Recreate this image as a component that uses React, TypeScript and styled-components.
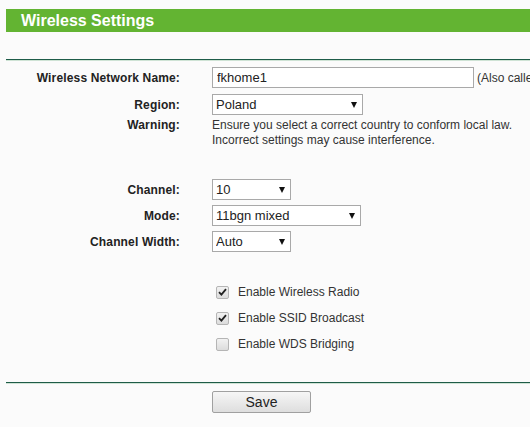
import React from "react";
import styled, { createGlobalStyle } from "styled-components";

const Global = createGlobalStyle`
  html, body { margin: 0; padding: 0; background: #fbfbfb; }
  body { font-family: "Liberation Sans", Arial, sans-serif; color: #222; overflow: hidden; }
`;

const Page = styled.div`
  width: 530px;
  height: 427px;
  padding-left: 6px;
  box-sizing: border-box;
  overflow: hidden;
`;

const Header = styled.div`
  margin-top: 9px;
  height: 23px;
  background: #63b432;
  display: flex;
  align-items: center;
  padding-left: 15px;
`;

const Title = styled.h1`
  margin: 0;
  font-size: 16px;
  font-weight: bold;
  color: #ffffff;
  line-height: 23px;
`;

const Rule = styled.div<{ $top: number }>`
  margin-top: ${(p) => p.$top}px;
  height: 1px;
  background: #1e5c48;
  border-bottom: 1px solid #cfe3d5;
`;

const Form = styled.div`
  display: flex;
  flex-direction: column;
  padding-top: 6px;
`;

const Row = styled.div<{ $mt?: number; $h?: number; $align?: string }>`
  display: grid;
  grid-template-columns: 174px 1fr;
  column-gap: 32px;
  align-items: ${(p) => p.$align || "center"};
  margin-top: ${(p) => p.$mt || 0}px;
  min-height: ${(p) => p.$h || 21}px;
`;

const Label = styled.div<{ $lh?: number }>`
  text-align: right;
  font-size: 12px;
  font-weight: bold;
  letter-spacing: 0.15px;
  color: #222;
  white-space: nowrap;
  line-height: ${(p) => (p.$lh ? `${p.$lh}px` : "normal")};
`;

const Control = styled.div`
  display: flex;
  align-items: center;
  white-space: nowrap;
`;

const TextInput = styled.input`
  width: 262px;
  height: 21px;
  box-sizing: border-box;
  border: 1px solid #a9a9a9;
  background: #fff;
  font-family: "Liberation Sans", Arial, sans-serif;
  font-size: 13px;
  color: #222;
  padding: 0 4px;
  margin: 0;
  outline: none;
`;

const Aside = styled.span`
  margin-left: 3px;
  font-size: 12px;
  color: #333;
`;

const SelectWrap = styled.div<{ $w: number }>`
  position: relative;
  width: ${(p) => p.$w}px;
  height: 21px;
  &::after {
    content: "";
    position: absolute;
    right: 6px;
    top: 8px;
    border-left: 3.5px solid transparent;
    border-right: 3.5px solid transparent;
    border-top: 6px solid #111;
    pointer-events: none;
  }
`;

const Select = styled.select`
  appearance: none;
  -webkit-appearance: none;
  width: 100%;
  height: 21px;
  box-sizing: border-box;
  border: 1px solid #a9a9a9;
  border-radius: 0;
  background: #fff;
  font-family: "Liberation Sans", Arial, sans-serif;
  font-size: 13px;
  color: #222;
  padding: 0 3px;
  margin: 0;
  outline: none;
`;

const Note = styled.div`
  font-size: 12px;
  line-height: 15px;
  color: #333;
`;

const CheckRow = styled.label<{ $mt?: number }>`
  display: flex;
  align-items: center;
  height: 26px;
  margin-top: ${(p) => p.$mt || 0}px;
  padding-left: 210px;
  font-size: 12px;
  color: #333;
`;

const Box = styled.span`
  width: 13px;
  height: 13px;
  box-sizing: border-box;
  border: 1px solid #b5b5b5;
  border-radius: 2px;
  background: linear-gradient(#f2f2f2, #dcdcdc);
  display: flex;
  align-items: center;
  justify-content: center;
  margin-right: 9px;
`;

const ButtonRow = styled.div`
  padding-left: 206px;
  margin-top: 7px;
`;

const SaveButton = styled.button`
  width: 99px;
  height: 22px;
  border: 1px solid #a0a0a0;
  border-radius: 2px;
  background: linear-gradient(#f6f6f6, #dedede);
  font-family: "Liberation Sans", Arial, sans-serif;
  font-size: 14px;
  color: #222;
  padding: 0;
`;

const Check = ({ on }: { on: boolean }) => (
  <Box>
    {on && (
      <svg width="9" height="8" viewBox="0 0 9 8">
        <path d="M1 4.2 L3.4 6.6 L8 1.2" fill="none" stroke="#222" strokeWidth="1.8" />
      </svg>
    )}
  </Box>
);

export default function App() {
  return (
    <>
      <Global />
      <Page>
        <Header>
          <Title>Wireless Settings</Title>
        </Header>
        <Rule $top={27} />
        <Form>
          <Row>
            <Label>Wireless Network Name:</Label>
            <Control>
              <TextInput defaultValue="fkhome1" />
              <Aside>(Also called the SSID)</Aside>
            </Control>
          </Row>
          <Row $mt={6}>
            <Label>Region:</Label>
            <Control>
              <SelectWrap $w={151}>
                <Select defaultValue="Poland">
                  <option>Poland</option>
                </Select>
              </SelectWrap>
            </Control>
          </Row>
          <Row $mt={3} $align="start" $h={30}>
            <Label $lh={15}>Warning:</Label>
            <Note>
              Ensure you select a correct country to conform local law.
              <br />
              Incorrect settings may cause interference.
            </Note>
          </Row>
          <Row $mt={31}>
            <Label>Channel:</Label>
            <Control>
              <SelectWrap $w={79}>
                <Select defaultValue="10">
                  <option>10</option>
                </Select>
              </SelectWrap>
            </Control>
          </Row>
          <Row $mt={5}>
            <Label>Mode:</Label>
            <Control>
              <SelectWrap $w={149}>
                <Select defaultValue="11bgn mixed">
                  <option>11bgn mixed</option>
                </Select>
              </SelectWrap>
            </Control>
          </Row>
          <Row $mt={5}>
            <Label>Channel Width:</Label>
            <Control>
              <SelectWrap $w={79}>
                <Select defaultValue="Auto">
                  <option>Auto</option>
                </Select>
              </SelectWrap>
            </Control>
          </Row>
          <CheckRow $mt={27}>
            <Check on={true} />
            Enable Wireless Radio
          </CheckRow>
          <CheckRow>
            <Check on={true} />
            Enable SSID Broadcast
          </CheckRow>
          <CheckRow>
            <Check on={false} />
            Enable WDS Bridging
          </CheckRow>
        </Form>
        <Rule $top={25} />
        <ButtonRow>
          <SaveButton>Save</SaveButton>
        </ButtonRow>
      </Page>
    </>
  );
}
